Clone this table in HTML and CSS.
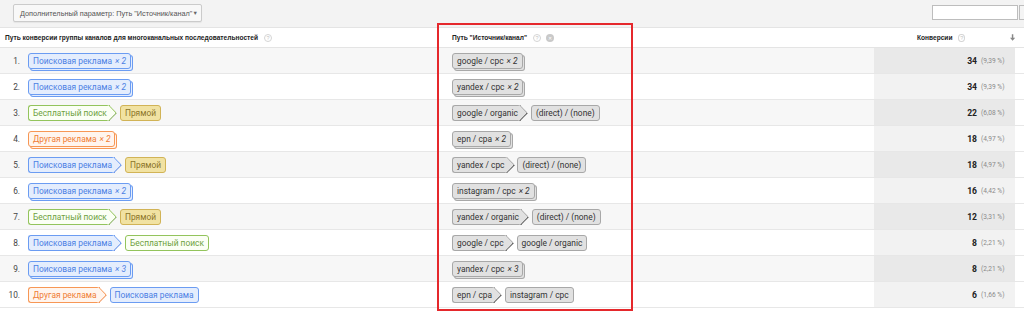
FILE: index.html
```html
<!DOCTYPE html>
<html lang="ru">
<head>
<meta charset="utf-8">
<link rel="stylesheet" href="styles.css">
</head>
<body>
<div class="page">
  <div class="topbar">
    <div class="dropdown">Дополнительный параметр: Путь "Источник/канал" <span class="caret">▼</span></div>
    <div class="search"><span class="input"></span><span class="btn"></span></div>
  </div>
  <div class="row head">
    <div class="c1"><b>Путь конверсии группы каналов для многоканальных последовательностей</b><span class="q">?</span></div>
    <div class="c2"><b>Путь "Источник/канал"</b><span class="q">?</span><span class="x">✕</span></div>
    <div class="c3"><b>Конверсии</b><span class="q">?</span><svg class="sort" width="7" height="9" viewBox="0 0 7 9"><path d="M2.5 0h2v5H7L3.5 9 0 5h2.5z" fill="#888"/></svg></div>
    <div class="c4"></div>
  </div>

  <div class="row odd">
    <div class="c1"><span class="n">1.</span><span class="chip blue stack">Поисковая реклама <i>× 2</i></span></div>
    <div class="c2"><span class="chip gray stack">google / cpc <i>× 2</i></span></div>
    <div class="c3"><span class="num">34</span><span class="pct">(9,39 %)</span></div><div class="c4"></div>
  </div>
  <div class="row">
    <div class="c1"><span class="n">2.</span><span class="chip blue stack">Поисковая реклама <i>× 2</i></span></div>
    <div class="c2"><span class="chip gray stack">yandex / cpc <i>× 2</i></span></div>
    <div class="c3"><span class="num">34</span><span class="pct">(9,39 %)</span></div><div class="c4"></div>
  </div>
  <div class="row odd">
    <div class="c1"><span class="n">3.</span><span class="chip green arrow">Бесплатный поиск</span><span class="chip yellow">Прямой</span></div>
    <div class="c2"><span class="chip gray arrow">google / organic</span><span class="chip gray">(direct) / (none)</span></div>
    <div class="c3"><span class="num">22</span><span class="pct">(6,08 %)</span></div><div class="c4"></div>
  </div>
  <div class="row">
    <div class="c1"><span class="n">4.</span><span class="chip orange stack">Другая реклама <i>× 2</i></span></div>
    <div class="c2"><span class="chip gray stack">epn / cpa <i>× 2</i></span></div>
    <div class="c3"><span class="num">18</span><span class="pct">(4,97 %)</span></div><div class="c4"></div>
  </div>
  <div class="row odd">
    <div class="c1"><span class="n">5.</span><span class="chip blue arrow">Поисковая реклама</span><span class="chip yellow">Прямой</span></div>
    <div class="c2"><span class="chip gray arrow">yandex / cpc</span><span class="chip gray">(direct) / (none)</span></div>
    <div class="c3"><span class="num">18</span><span class="pct">(4,97 %)</span></div><div class="c4"></div>
  </div>
  <div class="row">
    <div class="c1"><span class="n">6.</span><span class="chip blue stack">Поисковая реклама <i>× 2</i></span></div>
    <div class="c2"><span class="chip gray stack">instagram / cpc <i>× 2</i></span></div>
    <div class="c3"><span class="num">16</span><span class="pct">(4,42 %)</span></div><div class="c4"></div>
  </div>
  <div class="row odd">
    <div class="c1"><span class="n">7.</span><span class="chip green arrow">Бесплатный поиск</span><span class="chip yellow">Прямой</span></div>
    <div class="c2"><span class="chip gray arrow">yandex / organic</span><span class="chip gray">(direct) / (none)</span></div>
    <div class="c3"><span class="num">12</span><span class="pct">(3,31 %)</span></div><div class="c4"></div>
  </div>
  <div class="row">
    <div class="c1"><span class="n">8.</span><span class="chip blue arrow">Поисковая реклама</span><span class="chip green">Бесплатный поиск</span></div>
    <div class="c2"><span class="chip gray arrow">google / cpc</span><span class="chip gray">google / organic</span></div>
    <div class="c3"><span class="num">8</span><span class="pct">(2,21 %)</span></div><div class="c4"></div>
  </div>
  <div class="row odd">
    <div class="c1"><span class="n">9.</span><span class="chip blue stack">Поисковая реклама <i>× 3</i></span></div>
    <div class="c2"><span class="chip gray stack">yandex / cpc <i>× 3</i></span></div>
    <div class="c3"><span class="num">8</span><span class="pct">(2,21 %)</span></div><div class="c4"></div>
  </div>
  <div class="row">
    <div class="c1"><span class="n">10.</span><span class="chip orange arrow">Другая реклама</span><span class="chip blue">Поисковая реклама</span></div>
    <div class="c2"><span class="chip gray arrow">epn / cpa</span><span class="chip gray">instagram / cpc</span></div>
    <div class="c3"><span class="num">6</span><span class="pct">(1,66 %)</span></div><div class="c4"></div>
  </div>

  <div class="highlight"></div>
</div>
</body>
</html>
```

FILE: styles.css
```css
* { box-sizing: border-box; }
html, body { margin: 0; padding: 0; background: #fff; }
body { font-family: Roboto, "Liberation Sans", Arial, sans-serif; color: #333; }
.page { position: relative; width: 1024px; height: 314px; overflow: hidden; }

.topbar {
  height: 28px;
  background: #f3f3f3;
  border-bottom: 1px solid #e4e4e4;
  display: flex;
  align-items: center;
  justify-content: space-between;
  padding-left: 13px;
}
.dropdown {
  width: 189px;
  height: 18px;
  margin-top: -1px;
  border: 1px solid #cbcbcb;
  border-radius: 2px;
  background: #f8f8f8;
  box-shadow: 0 1px 1px rgba(0,0,0,0.06);
  font-family: "Liberation Sans", Arial, sans-serif;
  font-size: 7.3px;
  color: #555;
  display: flex;
  align-items: center;
  padding-left: 6px;
  white-space: nowrap;
}
.caret { margin-left: auto; margin-right: 4px; font-size: 5.5px; color: #666; }
.search { width: 92px; display: flex; overflow: hidden; margin-top: -2px; }
.input { flex: none; width: 86px; height: 15px; background: #fff; border: 1px solid #bdbdbd; }
.btn { flex: none; width: 20px; height: 15px; margin-left: 1px; border: 1px solid #bdbdbd; background: #f4f4f4; }

.row {
  display: grid;
  grid-template-columns: 440px 434px 141px 9px;
  height: 26px;
  border-bottom: 1px solid #e7e7e7;
  background: #fff;
}
.row.odd { background: #f7f7f7; }
.row > div { display: flex; align-items: center; white-space: nowrap; }
.row .c3 { background: #f2f2f2; justify-content: flex-end; padding-right: 4px; }
.row.odd .c3 { background: #e9e9e9; }
.row .c4 { background: #fff; }

.row.head { height: 20px; background: #fff; border-bottom: 1px solid #e4e4e4; }
.row.head > div { font-family: "Liberation Sans", Arial, sans-serif; font-size: 6.6px; color: #222; }
.row.head .c1 { padding-left: 5px; }
.row.head .c2 { padding-left: 12px; }
.row.head .c3 { background: #fff; padding-right: 0; justify-content: flex-start; padding-left: 43px; }
.row.head .c4 { background: #fff; }
.q {
  display: inline-flex; align-items: center; justify-content: center;
  width: 8px; height: 8px; border: 1px solid #d5d5d5; border-radius: 50%;
  font-size: 5.5px; color: #c4c4c4; margin-left: 6px; font-weight: normal;
}
.x {
  display: inline-flex; align-items: center; justify-content: center;
  width: 8px; height: 8px; border-radius: 50%; background: #c9c9c9; color: #fff;
  font-size: 5px; margin-left: 5px;
}
.sort { margin-left: 45px; }

.n { width: 20px; text-align: right; font-size: 8.3px; color: #444; margin-right: 8px; }
.c2 { padding-left: 12px; }

.chip {
  position: relative;
  z-index: 0;
  display: inline-flex;
  align-items: center;
  height: 16px;
  padding: 0 4px;
  border: 1px solid;
  border-radius: 3px;
  font-size: 8.4px;
  margin-right: 4px;
}
.chip i { margin-left: 3px; }
.blue { background: #e4edfd; border-color: #6b9cf2; color: #4c7fe4; }
.green { background: #fbfff5; border-color: #93c45c; color: #6d9f3d; }
.yellow { background: #f1e2a2; border-color: #d1b356; color: #8b7428; }
.orange { background: #fff5ee; border-color: #f79755; color: #ef7c34; }
.gray { background: #e1e1e1; border-color: #a8a8a8; color: #333; }

.stack.blue { box-shadow: 2px 2px 0 -1px #e4edfd, 2px 2px 0 0 #6b9cf2; }
.stack.orange { box-shadow: 2px 2px 0 -1px #fff5ee, 2px 2px 0 0 #f79755; }
.stack.gray { box-shadow: 2px 2px 0 -1px #e1e1e1, 2px 2px 0 0 #a8a8a8; }

.arrow {
  border-right: none;
  border-top-right-radius: 0;
  border-bottom-right-radius: 0;
  margin-right: 10px;
  padding-right: 3px;
}
.arrow::after {
  content: "";
  position: absolute;
  z-index: -1;
  right: -5px;
  top: 1.3px;
  width: 10.6px;
  height: 10.6px;
  background: inherit;
  border-top: 1px solid;
  border-right: 1px solid;
  border-color: inherit;
  transform: rotate(45deg);
  border-top-right-radius: 2px;
}

.num { font-size: 8.6px; font-weight: bold; color: #222; }
.pct { width: 30px; margin-left: 4px; font-size: 6.6px; color: #8a8a8a; }

.highlight {
  position: absolute;
  left: 437px;
  top: 23px;
  width: 196px;
  height: 288px;
  border: 2px solid #e5282c;
  pointer-events: none;
}
```
